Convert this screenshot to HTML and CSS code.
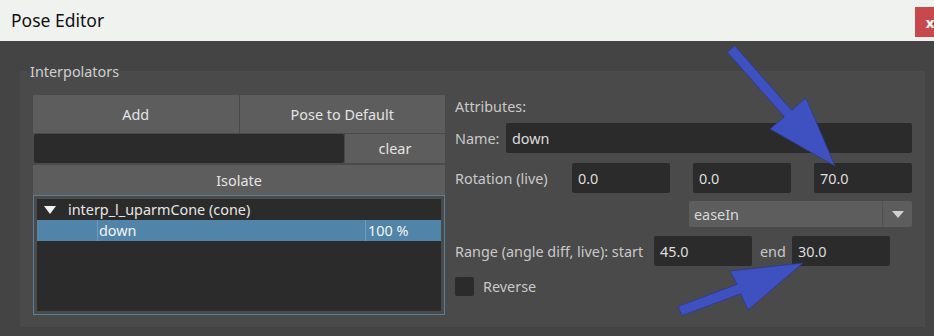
FILE: index.html
```html
<!DOCTYPE html>
<html>
<head>
<meta charset="utf-8">
<link rel="stylesheet" href="styles.css">
</head>
<body>
<div class="titlebar">
  <span class="title">Pose Editor</span>
  <div class="close">x</div>
</div>
<div class="main">
  <div class="group">
    <div class="group-label">Interpolators</div>
    <div class="group-body">
      <div class="left">
        <div class="btnrow">
          <div class="btn">Add</div>
          <div class="btn">Pose to Default</div>
        </div>
        <div class="filterrow">
          <div class="field"></div>
          <div class="btn clear">clear</div>
        </div>
        <div class="btn isolate">Isolate</div>
        <div class="tree">
          <div class="tree-inner">
            <div class="node"><span class="tri"></span><span>interp_l_uparmCone (cone)</span></div>
            <div class="node sel"><span class="c1"></span><span class="c2">down</span><span class="c3">100 %</span></div>
          </div>
        </div>
      </div>
      <div class="right">
        <div class="row attr">Attributes:</div>
        <div class="row name">
          <span class="lbl lbl-name">Name:</span>
          <div class="input grow">down</div>
        </div>
        <div class="row rot">
          <span class="lbl lbl-rot">Rotation (live)</span>
          <div class="input num">0.0</div>
          <div class="input num">0.0</div>
          <div class="input num">70.0</div>
        </div>
        <div class="row combo-row">
          <div class="combo">
            <span class="combo-text">easeIn</span>
            <span class="combo-arrow"><span class="dtri"></span></span>
          </div>
        </div>
        <div class="row range">
          <span class="lbl lbl-range">Range (angle diff, live): start</span>
          <div class="input num">45.0</div>
          <span class="lbl lbl-end">end</span>
          <div class="input num">30.0</div>
        </div>
        <div class="row rev">
          <span class="check"></span>
          <span class="lbl">Reverse</span>
        </div>
      </div>
    </div>
  </div>
</div>
<svg class="arrows" width="934" height="336" viewBox="0 0 934 336">
  <polygon points="727.3,52.3 734.7,45.7 791.7,110.2 806,98 835,166 770,129 784.3,116.8" fill="#3f50c0" stroke="#2c3a8e" stroke-width="0.8" stroke-linejoin="round"/>
  <polygon points="678.2,306.3 737.2,284.3 730,271 803,263 748,310 740.8,293.7 681.8,315.7" fill="#3f50c0" stroke="#2c3a8e" stroke-width="0.8" stroke-linejoin="round"/>
</svg>
</body>
</html>
```

FILE: styles.css
```css
* { box-sizing: border-box; }
html, body {
  margin: 0;
  padding: 0;
  width: 934px;
  height: 336px;
  overflow: hidden;
  background: #444444;
  font-family: "Noto Sans", "Open Sans", sans-serif;
  font-size: 14.4px;
  color: #c9c9c9;
}
.titlebar {
  height: 41px;
  background: #f0f2ef;
  display: flex;
  align-items: center;
  padding-left: 11px;
}
.title {
  font-size: 17.5px;
  color: #111;
  flex: 1;
  margin-top: -2px;
}
.close {
  width: 30px;
  height: 30px;
  margin-right: -11px;
  background: #c8494b;
  color: #fff;
  font-weight: bold;
  font-size: 15px;
  display: flex;
  align-items: center;
  justify-content: center;
  margin-top: 3px;
}
.main {
  padding: 30px 9px 0 20px;
}
.group {
  display: flow-root;
  width: 905px;
  height: 256px;
  background: #4a4a4a;
  padding: 0 12px 0 13px;
}
.group-label {
  display: block;
  width: max-content;
  height: 16px;
  line-height: 16px;
  margin-top: -7px;
  margin-left: -5px;
  color: #cfcfcf;
  background: linear-gradient(#444444 7px, #4a4a4a 7px);
  padding: 0 2px;
}
.group-body {
  display: flex;
  gap: 10px;
  padding-top: 15px;
}
.left {
  width: 412px;
  display: flex;
  flex-direction: column;
}
.btn {
  background: #5d5d5d;
  color: #e4e4e4;
  display: flex;
  align-items: center;
  justify-content: center;
}
.btnrow {
  display: flex;
  gap: 1px;
  height: 38px;
}
.btnrow .btn { flex: 1; }
.filterrow {
  display: flex;
  height: 29px;
  margin-top: 1px;
  gap: 1px;
}
.field {
  flex: 1;
  background: #2b2b2b;
  margin-left: 1px;
  border-radius: 2px;
}
.clear { width: 100px; }
.isolate {
  height: 30px;
  margin-top: 2px;
}
.tree {
  height: 120px;
  border: 1px solid #5b7e97;
  padding: 3px;
}
.tree-inner {
  height: 100%;
  background: #2b2b2b;
}
.node {
  height: 21px;
  display: flex;
  align-items: center;
  color: #e6e6e6;
}
.tri {
  width: 0;
  height: 0;
  border-left: 6px solid transparent;
  border-right: 6px solid transparent;
  border-top: 8px solid #f2f2f2;
  margin-left: 7px;
  margin-right: 12px;
}
.sel {
  background: #5084a9;
  color: #f4f4f4;
}
.c1 { width: 60px; height: 100%; }
.c2, .c3 {
  height: 100%;
  display: flex;
  align-items: center;
  border-left: 1px solid #6f9cbc;
  padding-left: 1px;
}
.c2 { width: 268px; }
.c3 { flex: 1; padding-left: 2px; }
.right {
  width: 457px;
  display: flex;
  flex-direction: column;
}
.row {
  display: flex;
  align-items: center;
}
.attr { height: 22px; }
.name { height: 30px; margin-top: 6px; }
.rot { height: 30px; margin-top: 10px; gap: 23px; }
.combo-row { height: 26px; margin-top: 8px; }
.range { height: 30px; margin-top: 9px; }
.rev { height: 19px; margin-top: 11px; }
.lbl { white-space: nowrap; }
.lbl-name { width: 51px; }
.lbl-rot { width: 94px; }
.lbl-range { width: 199px; }
.lbl-end { width: 40px; padding-left: 8px; }
.input {
  height: 30px;
  background: #2b2b2b;
  border-radius: 2px;
  color: #dedede;
  padding-left: 6px;
  display: flex;
  align-items: center;
}
.grow { flex: 1; }
.num { width: 98px; }
.combo {
  margin-left: 234px;
  width: 224px;
  height: 26px;
  background: #5d5d5d;
  border-radius: 2px;
  display: flex;
  align-items: center;
  color: #d8d8d8;
}
.combo-text { flex: 1; padding-left: 5px; }
.combo-arrow {
  width: 30px;
  height: 100%;
  border-left: 1px solid #525252;
  display: flex;
  align-items: center;
  justify-content: center;
}
.dtri {
  width: 0;
  height: 0;
  border-left: 6px solid transparent;
  border-right: 6px solid transparent;
  border-top: 7px solid #d0d0d0;
}
.check {
  width: 19px;
  height: 19px;
  background: #2b2b2b;
  border-radius: 2px;
  margin-right: 9px;
}
.arrows {
  position: absolute;
  left: 0;
  top: 0;
  pointer-events: none;
}
```
